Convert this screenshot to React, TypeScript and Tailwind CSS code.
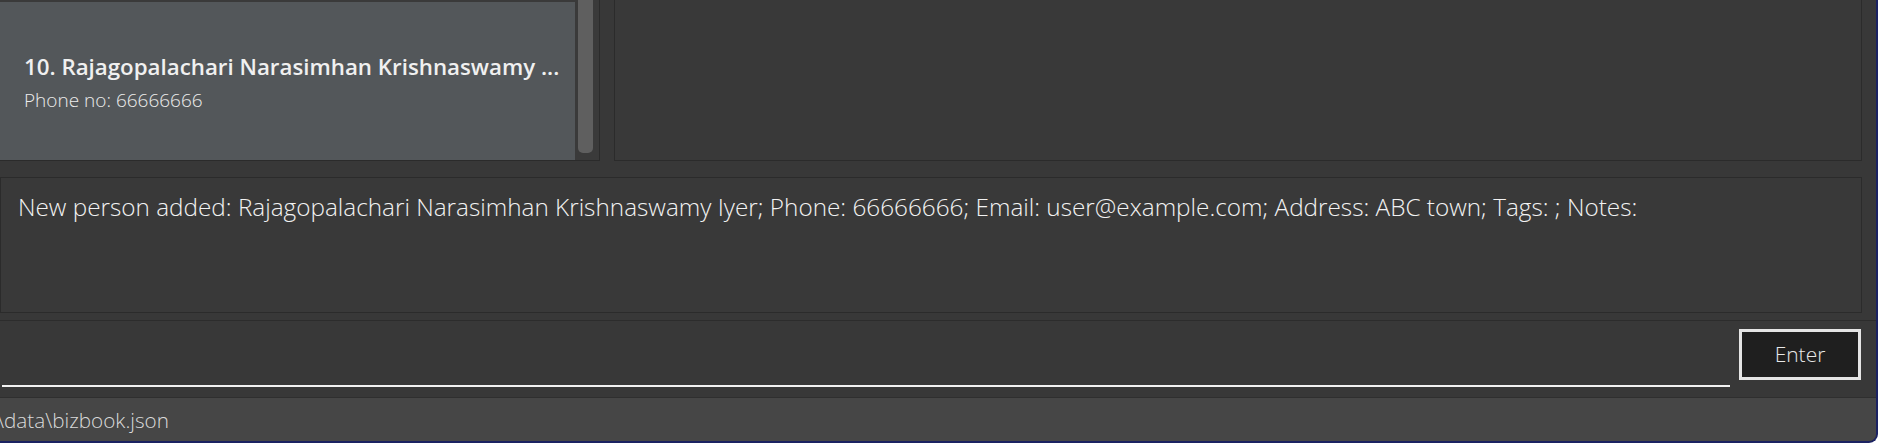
import React from 'react';

const ui = { fontFamily: '"Open Sans", "Noto Sans", sans-serif' };

function PersonCard() {
  return (
    <div className="mt-[2px] h-[158px] w-[575px] bg-[#53575a] pl-[24px] pt-[3px] flex flex-col justify-center" style={ui}>
      <div className="text-[22.3px] font-semibold leading-[30px] text-[#f0f0f0] whitespace-nowrap">
        10. Rajagopalachari Narasimhan Krishnaswamy ...
      </div>
      <div className="mt-[5px] text-[19px] font-light leading-[26px] text-[#ececec] whitespace-nowrap">
        Phone no: 66666666
      </div>
    </div>
  );
}

export default function App() {
  return (
    <div className="w-[1880px] h-[443px] bg-white overflow-hidden">
      <div className="w-[1878px] h-[443px] bg-[#383838] border-r-2 border-b-2 border-[#1b2262] rounded-br-[9px] overflow-hidden flex flex-col">
        {/* Top: list + detail panel */}
        <div className="h-[161px] flex shrink-0">
          <div className="w-[600px] h-full flex border-r border-b border-[#2b2b2b] bg-[#3a3a3a]">
            <PersonCard />
            <div className="pl-[3px] w-[18px]">
              <div className="w-[15px] h-[153px] bg-[#5f5f5f] rounded-b-[5px]" />
            </div>
          </div>
          <div className="ml-[14px] w-[1248px] h-full border-l border-r border-b border-[#2b2b2b] bg-[#393939]" />
        </div>

        {/* Result display */}
        <div className="mt-[16px] h-[136px] w-[1862px] shrink-0 border border-[#2b2b2b] bg-[#393939] pl-[17px] pt-[12px]" style={ui}>
          <p className="text-[24.3px] font-light leading-[34px] text-[#f2f2f2] whitespace-nowrap">
            New person added: Rajagopalachari Narasimhan Krishnaswamy Iyer; Phone: 66666666; Email: user@example.com; Address: ABC town; Tags: ; Notes:
          </p>
        </div>

        {/* Command box */}
        <div className="mt-[7px] h-[77px] shrink-0 border-t border-[#2c2c2c] flex items-start">
          <div className="ml-[2px] mt-[64px] w-[1728px] h-[2px] bg-[#f2f2f2]" />
          <button
            className="ml-[9px] mt-[8px] w-[122px] h-[51px] border-[3px] border-[#e4e4e4] bg-[#1f1f1f] text-[21px] font-light text-[#e8e8e8]"
            style={ui}
          >
            Enter
          </button>
        </div>

        {/* Status bar */}
        <div className="flex-1 bg-[#464646] border-t border-[#2f2f2f] flex items-center overflow-hidden" style={ui}>
          <span className="-ml-[3px] pt-[2px] text-[20.7px] font-light text-[#dadada] whitespace-nowrap">\data\bizbook.json</span>
        </div>
      </div>
    </div>
  );
}
